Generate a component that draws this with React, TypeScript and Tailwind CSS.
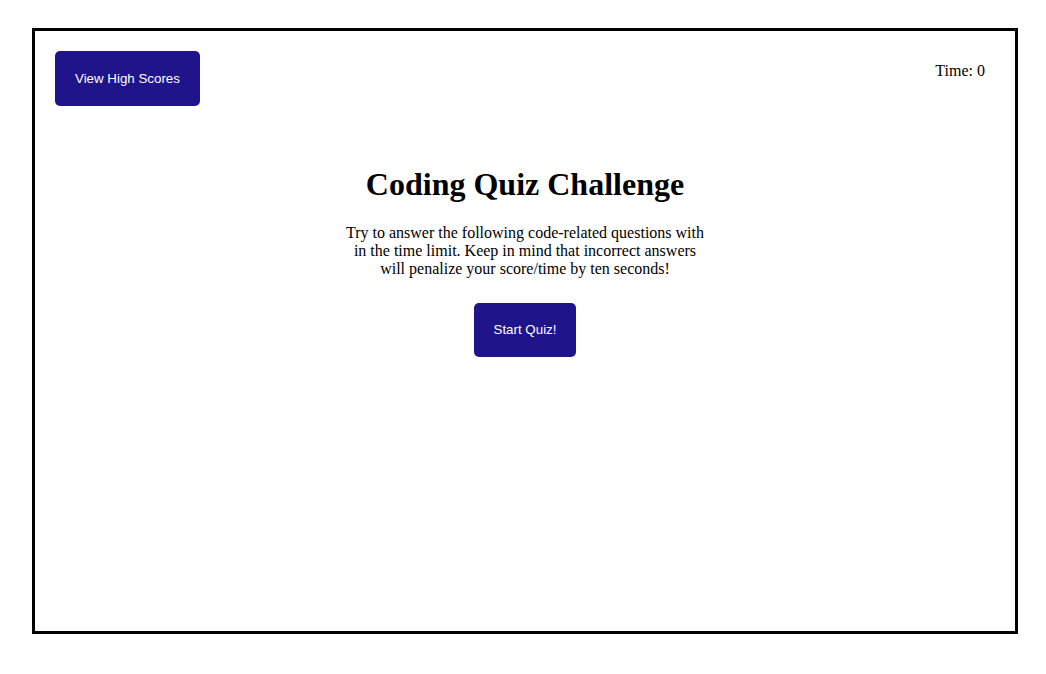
const App = () => {
  return (
    <div className="bg-white pt-[28px] pl-[32px] pr-[28px]">
      <div className="h-[606px] border-[3px] border-black px-[20px] pt-[20px] font-['Liberation_Serif',serif] text-black">
        <header className="flex items-start justify-between">
          <button className="rounded-[5px] bg-[#20148b] px-5 py-5 font-['Liberation_Sans',Arial,sans-serif] text-[13.333px] leading-[15px] text-white">
            View High Scores
          </button>
          <div className="mt-[8px] mr-[10px] text-[16px]">Time: 0</div>
        </header>

        <main className="mt-[60px] flex flex-col items-center text-center">
          <h1 className="text-[32px] font-bold leading-[37px]">Coding Quiz Challenge</h1>
          <p className="mt-[21px] w-[362px] text-[16px] leading-[18px]">
            Try to answer the following code-related questions with in the time limit. Keep in mind that incorrect answers will penalize your score/time by ten seconds!
          </p>
          <button className="mt-[25px] rounded-[5px] bg-[#20148b] px-5 py-5 font-['Liberation_Sans',Arial,sans-serif] text-[13.333px] leading-[14px] text-white">
            Start Quiz!
          </button>
        </main>
      </div>
    </div>
  );
};

export default App;
